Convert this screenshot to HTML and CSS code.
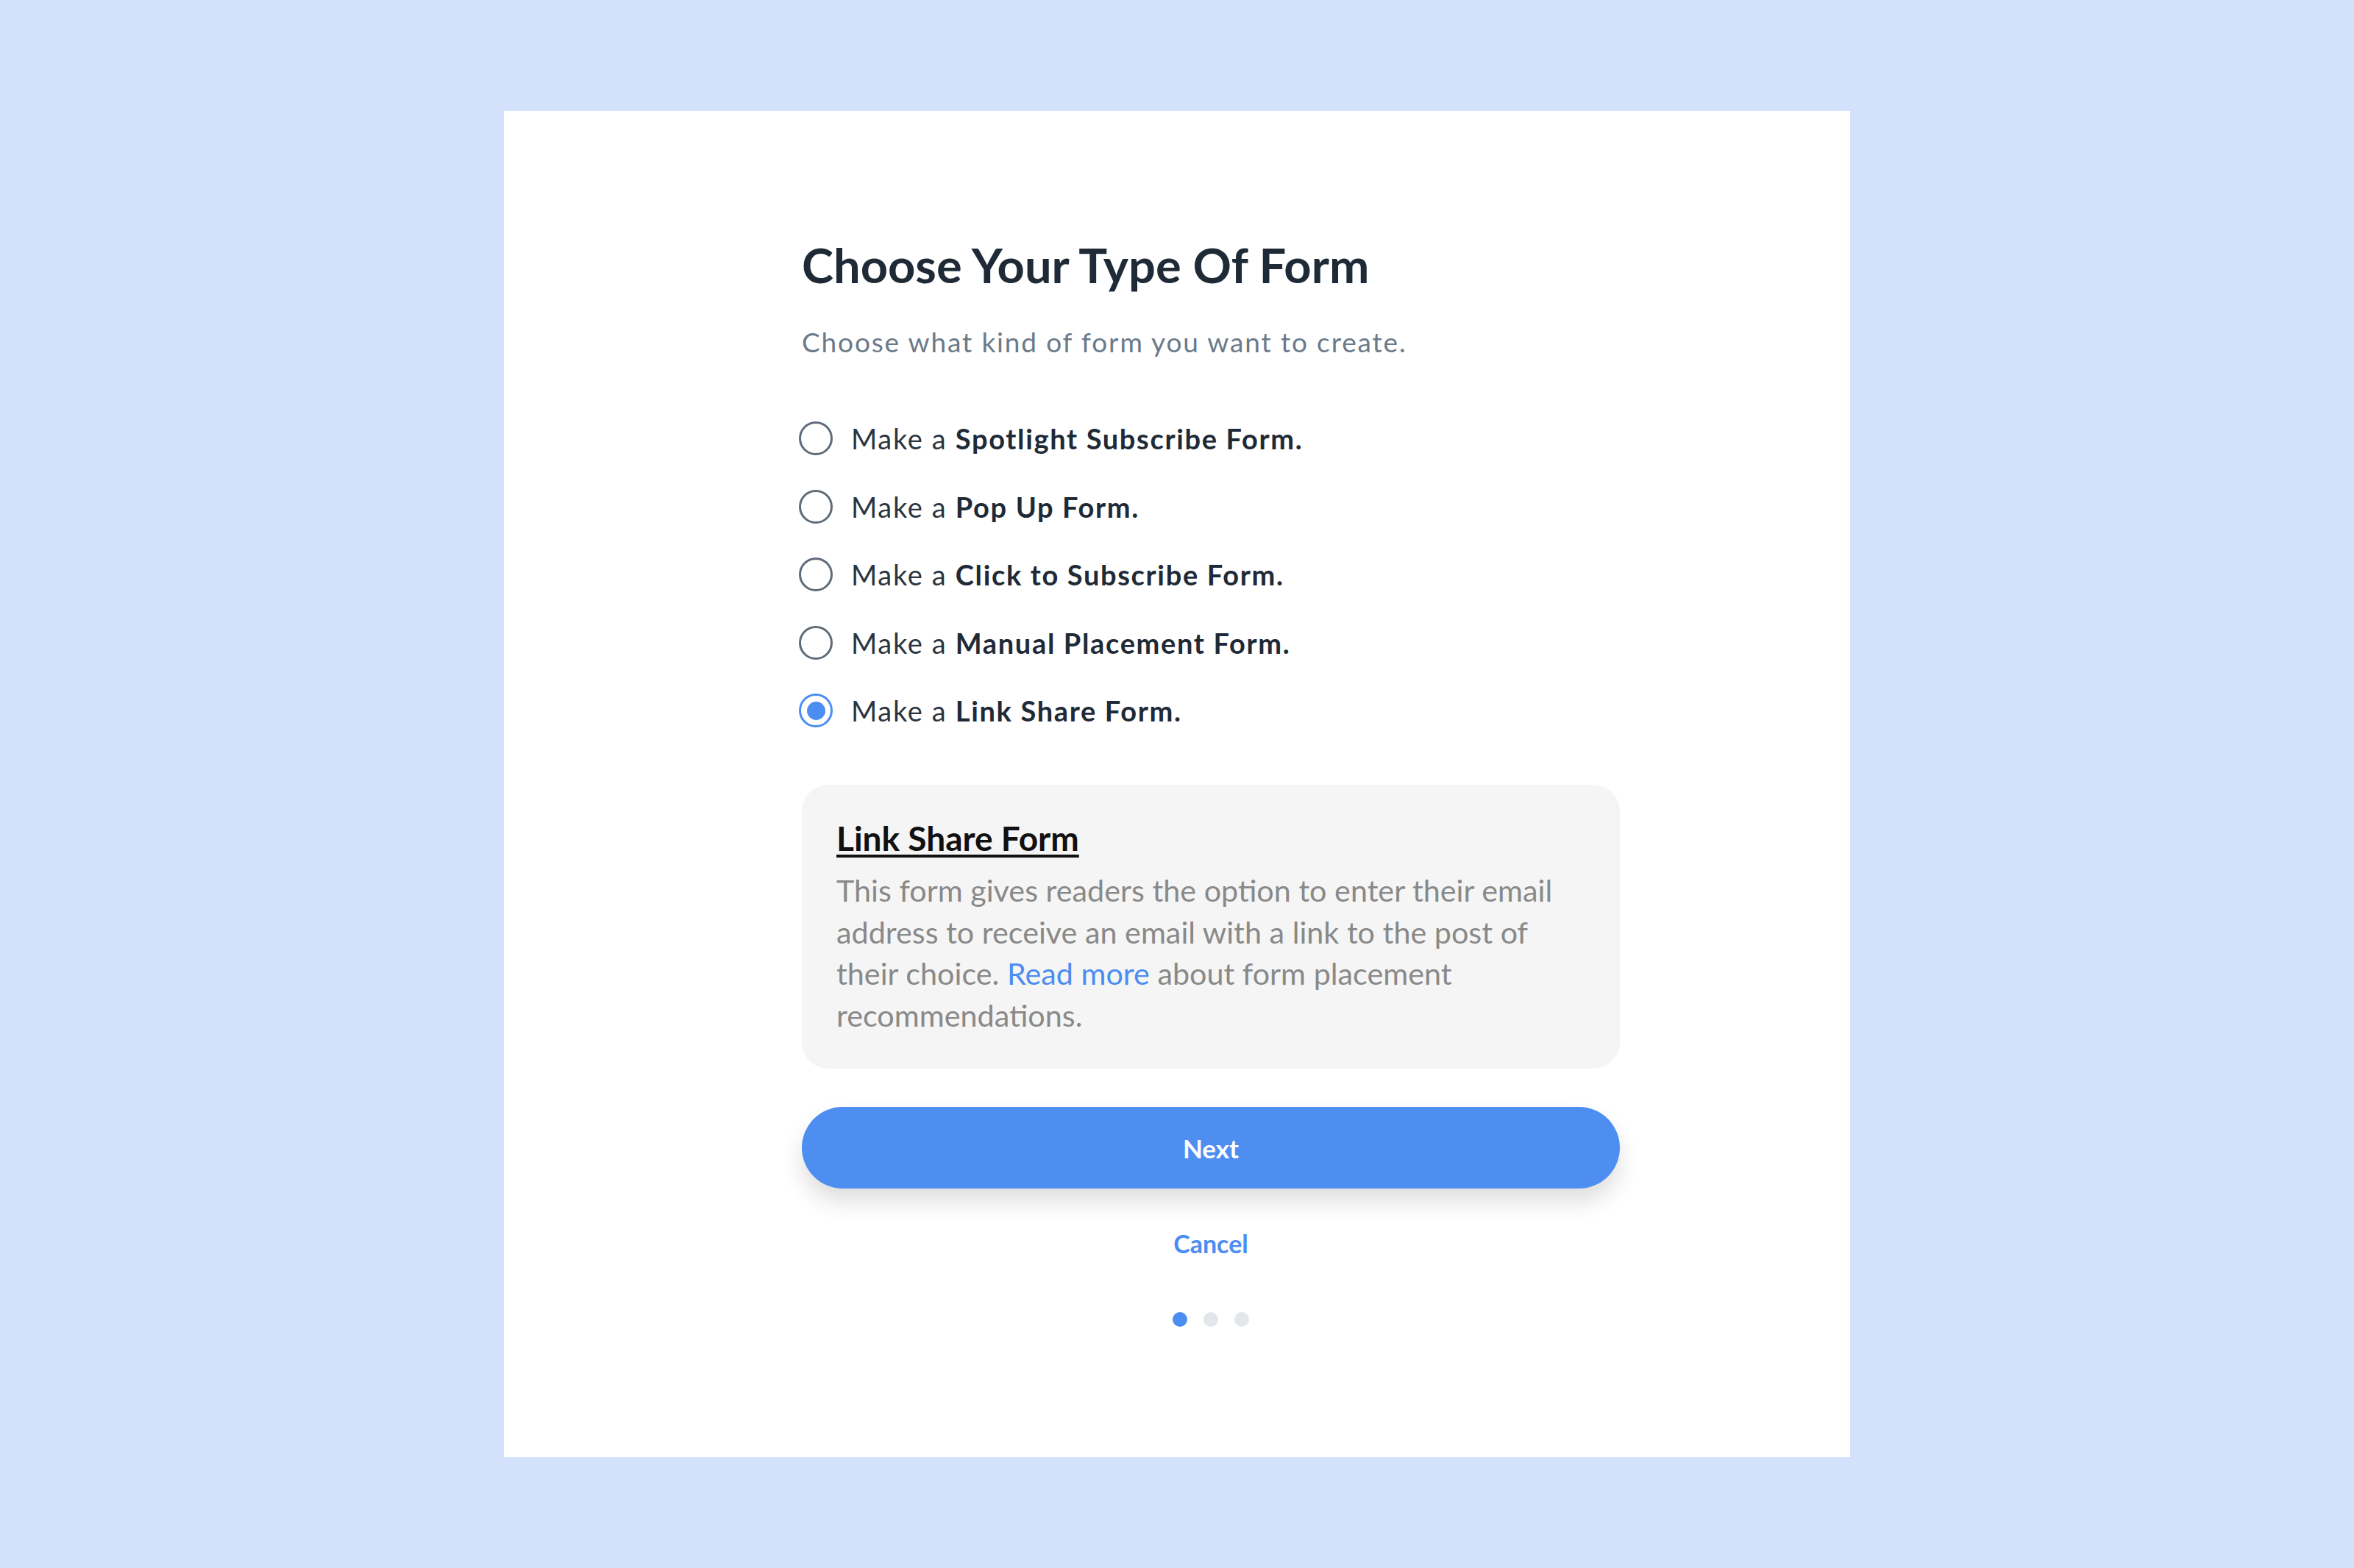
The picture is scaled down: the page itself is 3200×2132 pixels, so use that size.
FILE: index.html
```html
<!DOCTYPE html>
<html lang="en">
<head>
<meta charset="utf-8">
<title>Choose Your Type Of Form</title>
<link rel="stylesheet" href="styles.css">
</head>
<body>
<main class="card">
  <div class="content">
    <h1 class="title">Choose Your Type Of Form</h1>
    <p class="subtitle">Choose what kind of form you want to create.</p>
    <div class="options">
      <label class="option"><input type="radio" name="form" class="radio"><span>Make a <b>Spotlight Subscribe Form.</b></span></label>
      <label class="option"><input type="radio" name="form" class="radio"><span>Make a <b>Pop Up Form.</b></span></label>
      <label class="option"><input type="radio" name="form" class="radio"><span>Make a <b>Click to Subscribe Form.</b></span></label>
      <label class="option"><input type="radio" name="form" class="radio"><span>Make a <b>Manual Placement Form.</b></span></label>
      <label class="option"><input type="radio" name="form" class="radio" checked><span>Make a <b>Link Share Form.</b></span></label>
    </div>
    <section class="info">
      <h2 class="info-title">Link Share Form</h2>
      <p class="info-text">This form gives readers the option to enter their email address to receive an email with a link to the post of their choice. <a class="link" href="#">Read more</a> about form placement recommendations.</p>
    </section>
    <button class="next" type="button">Next</button>
    <a class="cancel" href="#">Cancel</a>
    <div class="dots">
      <span class="dot active"></span>
      <span class="dot"></span>
      <span class="dot"></span>
    </div>
  </div>
</main>
</body>
</html>
```
FILE: styles.css
```css
* { box-sizing: border-box; }
html, body { margin: 0; padding: 0; }
body {
  width: 3200px;
  height: 2132px;
  background: #d3e2fa;
  display: flex;
  align-items: center;
  justify-content: center;
  font-family: Lato, "Open Sans", sans-serif;
}
.card {
  width: 1830px;
  height: 1830px;
  background: #ffffff;
  padding: 170px 313px 0 405px;
}
.content {
  display: flex;
  flex-direction: column;
  width: 1112px;
}
.title {
  margin: 0;
  font-size: 65px;
  line-height: 78px;
  font-weight: 700;
  color: #1f2a37;
}
.subtitle {
  margin: 43px 0 0;
  font-size: 37px;
  line-height: 45px;
  letter-spacing: 1.85px;
  color: #6b7a89;
}
.options {
  margin: 86px 0 0 -4px;
  display: flex;
  flex-direction: column;
  gap: 46.5px;
}
.option {
  display: flex;
  align-items: center;
  gap: 25px;
  height: 46px;
  font-size: 38px;
  line-height: 46px;
  letter-spacing: 1.65px;
  color: #2b3540;
}
.option b { font-weight: 700; color: #1f2a37; }
.radio {
  appearance: none;
  -webkit-appearance: none;
  margin: 0;
  width: 46px;
  height: 46px;
  border: 3px solid #5f6b77;
  border-radius: 50%;
  display: grid;
  place-items: center;
  flex: none;
}
.radio:checked { border-color: #4b8df0; }
.radio:checked::before {
  content: "";
  width: 25px;
  height: 25px;
  border-radius: 50%;
  background: #4b8df0;
}
.info {
  margin-top: 78px;
  background: #f5f5f5;
  border-radius: 36px;
  padding: 45px 46px 45px 47px;
}
.info-title {
  margin: 0;
  font-size: 46px;
  line-height: 55px;
  font-weight: 700;
  color: #111111;
  text-decoration: underline;
  text-decoration-thickness: 4px;
  text-underline-offset: 5px;
}
.info-text {
  margin: 15px 0 0;
  font-size: 41.3px;
  line-height: 56.5px;
  color: #898989;
}
.link { color: #4b8df0; text-decoration: none; }
.next {
  margin-top: 52px;
  height: 111px;
  border: 0;
  border-radius: 56px;
  background: #4d8ef0;
  color: #ffffff;
  font-family: inherit;
  font-size: 35px;
  font-weight: 700;
  box-shadow: 0 18px 30px rgba(0, 0, 0, 0.13);
}
.cancel {
  margin-top: 54px;
  align-self: center;
  font-size: 34px;
  line-height: 41px;
  font-weight: 700;
  color: #4b8df0;
  text-decoration: none;
}
.dots {
  margin-top: 73px;
  display: flex;
  justify-content: center;
  gap: 22px;
}
.dot {
  width: 20px;
  height: 20px;
  border-radius: 50%;
  background: #e3e7eb;
}
.dot.active { background: #4b8df0; }
```
